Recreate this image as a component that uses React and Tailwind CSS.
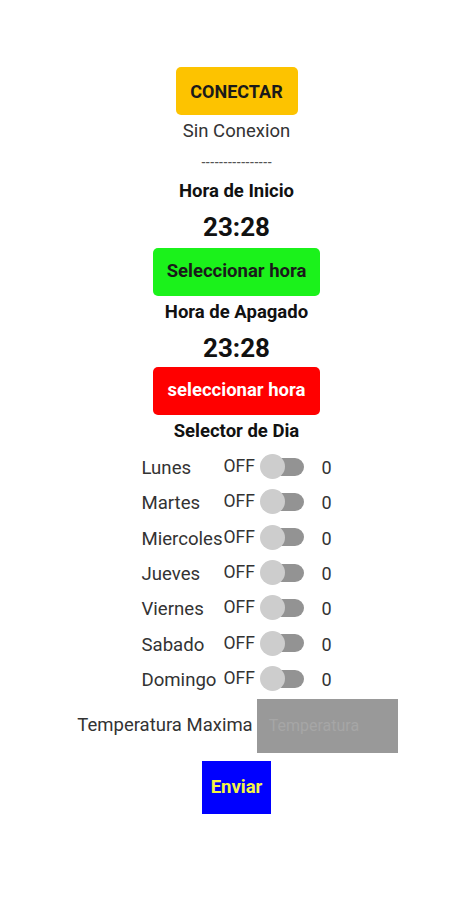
const days = ["Lunes", "Martes", "Miercoles", "Jueves", "Viernes", "Sabado", "Domingo"];

const DayRow = ({ name }) => {
  return (
    <div className="h-[35.33px] w-[190px] mx-auto flex items-center text-[#333]">
      <span className="w-[82px] text-[18.6px] leading-none pt-[3px] whitespace-nowrap">{name}</span>
      <span className="w-[37px] text-[17.5px] leading-none">OFF</span>
      <div className="relative w-[44px] h-[24px] flex items-center">
        <div className="absolute left-[6px] right-0 h-[18px] rounded-full bg-[#939393]" />
        <div className="absolute left-0 w-[25px] h-[25px] rounded-full bg-[#cdcdcd]" />
      </div>
      <span className="ml-[17px] text-[18px] leading-none pt-[3px]">0</span>
    </div>
  );
};

export default function App() {
  return (
    <div className="w-[473px] h-[900px] bg-white flex flex-col items-center font-['Roboto',sans-serif]">
      <button className="mt-[67px] w-[122px] h-[48px] rounded-[5px] bg-[#fdc300] text-[18px] font-bold text-[#1a1a1a]">
        CONECTAR
      </button>
      <div className="h-[34px] flex items-center text-[18.5px] text-[#333]">Sin Conexion</div>
      <div className="h-[28px] flex items-center text-[13px] font-medium text-[#555]">----------------</div>
      <div className="h-[30px] flex items-center text-[18.5px] font-bold text-[#111]">Hora de Inicio</div>
      <div className="h-[41px] flex items-center text-[26px] font-bold text-[#111]">23:28</div>
      <button className="w-[167px] h-[48px] rounded-[5px] bg-[#1bf21b] text-[18.5px] font-bold text-[#1a1a1a]">
        Seleccionar hora
      </button>
      <div className="h-[33px] flex items-center text-[18.5px] font-bold text-[#111]">Hora de Apagado</div>
      <div className="h-[38px] flex items-center text-[26px] font-bold text-[#111]">23:28</div>
      <button className="w-[167px] h-[48px] rounded-[5px] bg-[#ff0000] text-[18.5px] font-bold text-white">
        seleccionar hora
      </button>
      <div className="h-[34px] flex items-center text-[18.5px] font-bold text-[#111]">Selector de Dia</div>
      <div className="w-full">
        {days.map((d) => (
          <DayRow key={d} name={d} />
        ))}
      </div>
      <div className="mt-[3px] h-[54px] flex items-center gap-[4px] ml-[2px]">
        <span className="text-[18.5px] text-[#333]">Temperatura Maxima</span>
        <div className="w-[141px] h-[54px] bg-[#999999] flex items-center px-[12px]">
          <span className="text-[16px] text-[#a6a6a6]">Temperatura</span>
        </div>
      </div>
      <button className="mt-[8px] w-[69px] h-[53px] bg-[#0000ff] text-[18.5px] font-bold text-[#f5f542]">
        Enviar
      </button>
    </div>
  );
}
